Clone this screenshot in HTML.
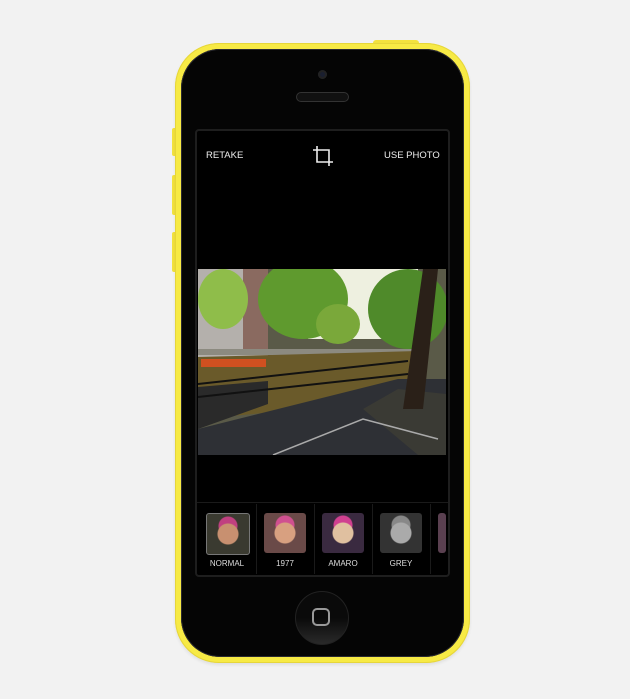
<!DOCTYPE html>
<html><head><style>
body{margin:0;width:630px;height:699px;background:#f2f2f2;position:relative;overflow:hidden;font-family:"Liberation Sans",sans-serif}
.abs{position:absolute}
.phone{left:175px;top:43px;width:295px;height:620px;border-radius:44px;background:#f7ea45;box-shadow:inset 0 0 0 1px #e6d63a,0 2px 3px rgba(0,0,0,.08)}
.inner{left:181px;top:49px;width:283px;height:608px;border-radius:39px;background:#050505;box-shadow:inset 0 0 0 1px #2a2a30}
.btn{background:#f3e23e;width:4px;left:172px;border-radius:2px 0 0 2px}
.screen{left:195px;top:129px;width:255px;height:448px;background:#000;border:2px solid #1e1e1e;border-radius:4px;box-sizing:border-box}
.t{color:#eee;font-size:9.5px;top:150px}
.thumb{top:513px;width:42px;height:40px;border-radius:3px;overflow:hidden}
.lab{top:559px;color:#ddd;font-size:8px;width:60px;text-align:center}
.sep{top:504px;width:1px;height:70px;background:#1a1a1a}
</style></head><body>
<div class="abs" style="left:373px;top:40px;width:46px;height:6px;background:#f3e23e;border-radius:3px 3px 0 0"></div>
<div class="abs btn" style="top:128px;height:28px"></div>
<div class="abs btn" style="top:175px;height:40px"></div>
<div class="abs btn" style="top:232px;height:40px"></div>
<div class="abs phone"></div>
<div class="abs inner"></div>
<div class="abs" style="left:318px;top:70px;width:9px;height:9px;border-radius:50%;background:#1a1f30;box-shadow:inset 0 0 0 2px #222"></div>
<div class="abs" style="left:296px;top:92px;width:53px;height:10px;border-radius:5px;background:#111;border:1px solid #333;box-sizing:border-box"></div>
<div class="abs screen"></div>
<div class="abs t" style="left:206px">RETAKE</div>
<div class="abs t" style="left:384px">USE PHOTO</div>
<svg class="abs" style="left:312px;top:145px" width="22" height="22" viewBox="0 0 22 22" fill="none" stroke="#eee" stroke-width="1.6"><path d="M5 1V17H21M1 5H17V21"/></svg>
<svg class="abs" style="left:198px;top:269px" width="248" height="186" viewBox="0 0 248 186">
<rect width="248" height="186" fill="#5a5a48"/>
<rect x="110" y="0" width="110" height="70" fill="#eef0e0"/>
<rect x="0" y="0" width="70" height="88" fill="#b4b0ac"/>
<rect x="45" y="0" width="25" height="80" fill="#8a6a60"/>
<ellipse cx="25" cy="30" rx="25" ry="30" fill="#8fbd4a"/>
<ellipse cx="105" cy="30" rx="45" ry="40" fill="#5f9a2e"/>
<ellipse cx="140" cy="55" rx="22" ry="20" fill="#7aa83a"/>
<ellipse cx="210" cy="40" rx="40" ry="40" fill="#4f8a2a"/>
<rect x="0" y="80" width="220" height="6" fill="#8c8a80"/>
<polygon points="0,88 220,82 220,130 0,150" fill="#6a5a2a"/>
<rect x="3" y="90" width="65" height="8" fill="#d05020"/>
<polygon points="0,118 70,112 70,135 0,160" fill="#2a2a2a"/>
<polygon points="0,160 200,110 248,110 248,186 0,186" fill="#2e3035"/>
<polygon points="165,140 200,120 248,125 248,186 220,186" fill="#3a3a34"/>
<path d="M0 115 L210 92 M0 128 L210 105" stroke="#111" stroke-width="2"/>
<path d="M225 0 L205 140 L225 140 L240 0Z" fill="#2a2018"/>
<path d="M75 186 L165 150 L240 170" stroke="#aaa" stroke-width="1.5" fill="none"/>
</svg>
<div class="abs" style="left:197px;top:502px;width:251px;height:1px;background:#1a1a1a"></div>
<div class="abs sep" style="left:256px"></div><div class="abs sep" style="left:314px"></div><div class="abs sep" style="left:372px"></div><div class="abs sep" style="left:430px"></div>
<div class="abs thumb" style="left:206px;background:radial-gradient(circle at 50% 50%,#c89070 0 10px,transparent 11px),radial-gradient(circle at 50% 30%,#c04080 0 9px,transparent 10px),#3a3a30;border:1px solid #777"></div>
<div class="abs thumb" style="left:264px;background:radial-gradient(circle at 50% 50%,#d8a080 0 10px,transparent 11px),radial-gradient(circle at 50% 30%,#d05090 0 9px,transparent 10px),#6a4a48"></div>
<div class="abs thumb" style="left:322px;background:radial-gradient(circle at 50% 50%,#e0c0a0 0 10px,transparent 11px),radial-gradient(circle at 50% 30%,#d04090 0 9px,transparent 10px),#3a2a40"></div>
<div class="abs thumb" style="left:380px;background:radial-gradient(circle at 50% 50%,#aaa 0 10px,transparent 11px),radial-gradient(circle at 50% 30%,#888 0 9px,transparent 10px),#333"></div>
<div class="abs thumb" style="left:438px;width:8px;background:#5a4050"></div>
<div class="abs lab" style="left:197px">NORMAL</div>
<div class="abs lab" style="left:255px">1977</div>
<div class="abs lab" style="left:313px">AMARO</div>
<div class="abs lab" style="left:371px">GREY</div>
<div class="abs" style="left:295px;top:591px;width:54px;height:54px;border-radius:50%;background:linear-gradient(#0a0a0a 50%,#2a2a2a);border:1px solid #222;box-sizing:border-box"></div>
<div class="abs" style="left:312px;top:608px;width:18px;height:18px;border:2px solid #999;border-radius:5px;box-sizing:border-box"></div>
</body></html>
